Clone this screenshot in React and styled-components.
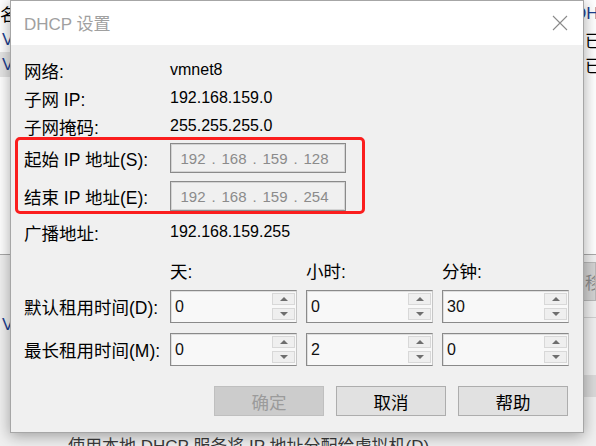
import React from 'react';
import styled, { createGlobalStyle } from 'styled-components';

const GlobalStyle = createGlobalStyle`
  html, body {
    margin: 0;
    padding: 0;
  }
  body {
    width: 596px;
    height: 446px;
    overflow: hidden;
    font-family: "Liberation Sans", "Noto Sans CJK SC", sans-serif;
    color: #000;
  }
`;

const Screen = styled.div`
  position: relative;
  width: 596px;
  height: 446px;
  overflow: hidden;
  background: #ffffff;
`;

/* ---- window behind the dialog ---- */

const Backdrop = styled.div`
  display: flex;
  flex-direction: column;
  height: 100%;
`;

const TableArea = styled.div`
  height: 254px;
  flex-shrink: 0;
  background: #ffffff;
  border-bottom: 1px solid #a9a9a9;
  display: flex;
  flex-direction: column;
`;

const TableRow = styled.div`
  display: flex;
  justify-content: space-between;
  align-items: center;
  height: ${(p) => (p.$head ? '27px' : '25px')};
  font-size: 17px;
  white-space: nowrap;
`;

const LeftCell = styled.span`
  display: flex;
  align-items: center;
  height: 100%;
  padding: 0 10px 0 ${(p) => p.$indent}px;
  background: ${(p) => (p.$shade ? '#e5e5e5' : 'transparent')};
  color: ${(p) => (p.$blue ? '#1d3f8f' : '#000')};
`;

const RightCell = styled.span`
  width: ${(p) => p.$width}px;
  overflow: hidden;
  color: ${(p) => (p.$blue ? '#1d3f8f' : '#000')};
`;

const LowerPanel = styled.div`
  flex: 1;
  min-height: 0;
  background: #f0f0f0;
  display: flex;
  justify-content: space-between;
`;

const LowerLeft = styled.div`
  display: flex;
  flex-direction: column;
  flex-shrink: 0;
  padding: 60px 0 0 2px;
  font-size: 17px;
  line-height: 20px;
  color: #1d3f8f;
  white-space: nowrap;
`;

const FootNote = styled.div`
  flex-shrink: 0;
  margin: 102px 0 0 66px;
  color: #3a3a3a;
  font-size: 17px;
  line-height: 20px;
`;

const LowerRight = styled.div`
  width: 14px;
  display: flex;
  flex-direction: column;
  padding-top: 7px;
`;

const SideButton = styled.div`
  height: 37px;
  background: #d2d2d2;
  border: 1px solid #b8b8b8;
  color: #8a8a8a;
  font-size: 17px;
  display: flex;
  align-items: center;
  padding-left: 2px;
  overflow: hidden;
  white-space: nowrap;
`;

const SideRule = styled.div`
  margin-top: 16px;
  height: 1px;
  background: #cfcfcf;
`;

const SideBlock = styled.div`
  margin-top: 57px;
  height: 22px;
  background: #dadada;
`;

/* ---- the dialog ---- */

const Dialog = styled.div`
  position: absolute;
  left: 10px;
  top: 0;
  width: 572px;
  height: 431px;
  border: 1px solid #a6a6a6;
  background: #f0f0f0;
  box-shadow: 0 3px 14px rgba(0, 0, 0, 0.35);
  display: flex;
  flex-direction: column;
`;

const TitleBar = styled.div`
  height: 44px;
  flex-shrink: 0;
  background: #ffffff;
  display: flex;
  align-items: center;
  justify-content: space-between;
  padding: 0 15px 0 13px;
`;

const Title = styled.span`
  font-size: 17px;
  color: #a0a0a0;
  margin-top: -2px;
`;

const Body = styled.div`
  display: flex;
  flex-direction: column;
  padding: 11px 15px 16px 13px;
`;

const InfoRow = styled.div`
  display: grid;
  grid-template-columns: 146px 1fr;
  align-items: center;
  height: 28px;
  margin-top: ${(p) => p.$gap || 0}px;
`;

const Label = styled.span`
  font-size: 17.5px;
  white-space: nowrap;
`;

const Value = styled.span`
  font-size: 16px;
`;

const Highlight = styled.div`
  box-sizing: border-box;
  width: 350px;
  height: 77px;
  margin: -3px 0 0 -9px;
  padding: 3px 0 0 6px;
  border: 3px solid #fb1e1e;
  border-radius: 5px;
  display: flex;
  flex-direction: column;
  gap: 8px;
`;

const IpRow = styled.div`
  display: grid;
  grid-template-columns: 146px 176px;
  align-items: center;
`;

const IpField = styled.div`
  box-sizing: border-box;
  height: 30px;
  border: 1px solid #8a8a8a;
  box-shadow: inset 0 0 0 1px #d4d4d4;
  background: #f0f0f0;
  display: flex;
  align-items: center;
  padding-left: 7px;
  font-size: 15px;
  color: #8b8b8b;
`;

const Octet = styled.span`
  width: 30px;
  text-align: center;
`;

const Dot = styled.span`
  width: 11px;
  text-align: center;
`;

const LeaseGrid = styled.div`
  display: grid;
  grid-template-columns: 137px repeat(3, 127px);
  grid-template-rows: 20px 33px 33px;
  column-gap: 9px;
  row-gap: 10px;
  align-items: center;
  margin-top: 14px;
`;

const Spinner = styled.div`
  box-sizing: border-box;
  height: 33px;
  display: flex;
  border: 1px solid #8a8a8a;
  border-right-color: #c6c6c6;
  box-shadow: inset 1px 1px 0 #dedede;
  background: #f8f8f8;
`;

const SpinValue = styled.span`
  flex: 1;
  display: flex;
  align-items: center;
  padding-left: 4px;
  font-size: 16px;
  color: #111;
`;

const SpinButtons = styled.div`
  width: 23px;
  display: flex;
  flex-direction: column;
  gap: 3px;
  padding: 2px 1px 2px 0;
`;

const SpinButton = styled.div`
  flex: 1;
  border: 1px solid #d8d8d8;
  background: #efefef;
  display: flex;
  align-items: center;
  justify-content: center;
`;

const Arrow = styled.span`
  width: 0;
  height: 0;
  border-left: 4px solid transparent;
  border-right: 4px solid transparent;
  ${(p) => (p.$up ? 'border-bottom' : 'border-top')}: 4px solid #6e6e6e;
`;

const ButtonRow = styled.div`
  display: flex;
  justify-content: flex-end;
  gap: 12px;
  margin-top: 20px;
`;

const DialogButton = styled.div`
  box-sizing: border-box;
  width: 110px;
  height: 30px;
  display: flex;
  align-items: center;
  justify-content: center;
  font-size: 17.5px;
  border: 1px solid ${(p) => (p.$disabled ? '#bfbfbf' : '#adadad')};
  background: ${(p) => (p.$disabled ? '#cccccc' : '#e1e1e1')};
  color: ${(p) => (p.$disabled ? '#9b9b9b' : '#000')};
`;

const CloseIcon = () => (
  <svg width="16" height="16" viewBox="0 0 16 16">
    <path d="M1 1 L15 15 M15 1 L1 15" stroke="#8a8a8a" strokeWidth="1.1" fill="none" />
  </svg>
);

const IpAddress = ({ parts }) => (
  <IpField>
    {parts.map((p, i) => (
      <React.Fragment key={i}>
        {i > 0 && <Dot>.</Dot>}
        <Octet>{p}</Octet>
      </React.Fragment>
    ))}
  </IpField>
);

const SpinBox = ({ value }) => (
  <Spinner>
    <SpinValue>{value}</SpinValue>
    <SpinButtons>
      <SpinButton>
        <Arrow $up />
      </SpinButton>
      <SpinButton>
        <Arrow />
      </SpinButton>
    </SpinButtons>
  </Spinner>
);

const App = () => {
  return (
    <Screen>
      <GlobalStyle />
      <Backdrop>
        <TableArea>
          <TableRow $head>
            <LeftCell $indent={-4}>名称</LeftCell>
            <RightCell $width={22} $blue>DHCP</RightCell>
          </TableRow>
          <TableRow>
            <LeftCell $indent={2} $blue>VMnet1</LeftCell>
            <RightCell $width={11}>已启用</RightCell>
          </TableRow>
          <TableRow>
            <LeftCell $indent={2} $blue $shade>VMnet8</LeftCell>
            <RightCell $width={11}>已启用</RightCell>
          </TableRow>
        </TableArea>
        <LowerPanel>
          <LowerLeft>
            <span>VMnet 信息</span>
            <FootNote>使用本地 DHCP 服务将 IP 地址分配给虚拟机(D)</FootNote>
          </LowerLeft>
          <LowerRight>
            <SideButton>移除网络(O)</SideButton>
            <SideRule />
            <SideBlock />
          </LowerRight>
        </LowerPanel>
      </Backdrop>

      <Dialog>
        <TitleBar>
          <Title>DHCP 设置</Title>
          <CloseIcon />
        </TitleBar>
        <Body>
          <InfoRow>
            <Label>网络:</Label>
            <Value>vmnet8</Value>
          </InfoRow>
          <InfoRow>
            <Label>子网 IP:</Label>
            <Value>192.168.159.0</Value>
          </InfoRow>
          <InfoRow>
            <Label>子网掩码:</Label>
            <Value>255.255.255.0</Value>
          </InfoRow>

          <Highlight>
            <IpRow>
              <Label>起始 IP 地址(S):</Label>
              <IpAddress parts={['192', '168', '159', '128']} />
            </IpRow>
            <IpRow>
              <Label>结束 IP 地址(E):</Label>
              <IpAddress parts={['192', '168', '159', '254']} />
            </IpRow>
          </Highlight>

          <InfoRow $gap={4}>
            <Label>广播地址:</Label>
            <Value>192.168.159.255</Value>
          </InfoRow>

          <LeaseGrid>
            <span />
            <Label>天:</Label>
            <Label>小时:</Label>
            <Label>分钟:</Label>

            <Label>默认租用时间(D):</Label>
            <SpinBox value="0" />
            <SpinBox value="0" />
            <SpinBox value="30" />

            <Label>最长租用时间(M):</Label>
            <SpinBox value="0" />
            <SpinBox value="2" />
            <SpinBox value="0" />
          </LeaseGrid>

          <ButtonRow>
            <DialogButton $disabled>确定</DialogButton>
            <DialogButton>取消</DialogButton>
            <DialogButton>帮助</DialogButton>
          </ButtonRow>
        </Body>
      </Dialog>
    </Screen>
  );
};

export default App;
